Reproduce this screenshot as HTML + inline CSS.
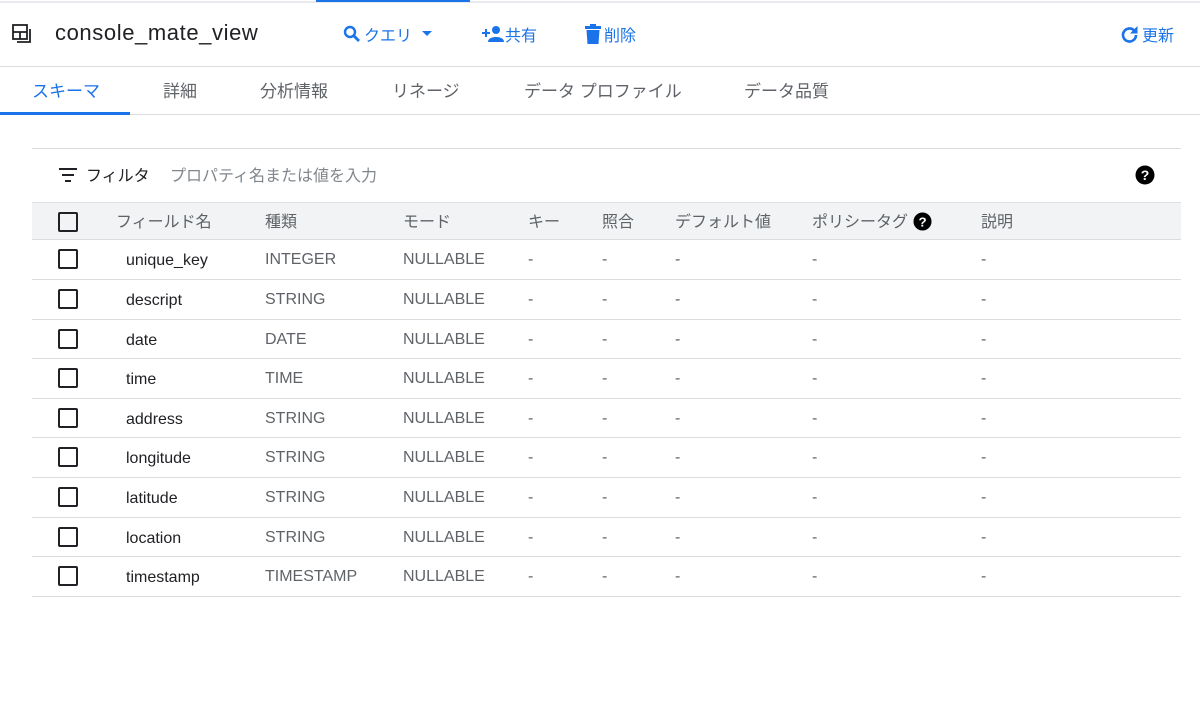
<!DOCTYPE html>
<html><head><meta charset="utf-8"><style>
*{margin:0;padding:0;box-sizing:border-box}
body{width:1200px;height:719px;background:#fff;font-family:"Liberation Sans","Noto Sans CJK JP",sans-serif;position:relative;overflow:hidden;color:#202124}
.a{position:absolute;white-space:nowrap}
.blue{color:#1a73e8}
.hl{position:absolute;height:1px;background:#dadce0}
.cb{position:absolute;width:20px;height:20px;border:2px solid #202124;border-radius:2px}
.g{color:#5f6368;font-size:16px}
.row{position:absolute;left:32px;width:1149px;height:39.6px;border-bottom:1px solid #dadce0}
.row span{position:absolute;top:11px;font-size:16px;color:#5f6368}
.row .cb{left:26px;top:9px}
.row .n{left:94px;color:#202124;top:12px}
</style></head><body>
<div class="hl" style="left:0;top:1px;width:1200px;height:2px;background:#e8eaed"></div>
<div class="a" style="left:316px;top:0;width:154px;height:2px;background:#1a73e8"></div>
<svg class="a" style="left:11px;top:23px" width="22" height="22" viewBox="0 0 22 22" fill="none" stroke="#202124" stroke-width="1.8"><rect x="2" y="2" width="14" height="14"/><path d="M2 9h14M9 9v7M19 6v13H6"/></svg>
<div class="a" style="left:55px;top:20px;font-size:22px;letter-spacing:0.6px;color:#202124">console_mate_view</div>
<svg class="a" style="left:343px;top:25px" width="18" height="18" viewBox="0 0 18 18"><circle cx="7" cy="7" r="5" fill="none" stroke="#1a73e8" stroke-width="2.4"/><path d="M10.5 10.5L16 16" stroke="#1a73e8" stroke-width="2.8"/></svg>
<div class="a blue" style="left:364px;top:22px;font-size:16px">クエリ</div>
<svg class="a" style="left:421px;top:30px" width="12" height="8"><path d="M1 1h10L6 6z" fill="#1a73e8"/></svg>
<svg class="a" style="left:482px;top:25px" width="24" height="18" viewBox="0 0 24 18" fill="#1a73e8"><path d="M3 4h2v3h3v2H5v3H3V9H0V7h3z"/><circle cx="14" cy="5" r="4"/><path d="M6 17c0-4 5-5 8-5s8 1 8 5z"/></svg>
<div class="a blue" style="left:505px;top:22px;font-size:16px">共有</div>
<svg class="a" style="left:585px;top:24px" width="16" height="20" viewBox="0 0 16 20" fill="#1a73e8"><rect x="0" y="2" width="16" height="3"/><rect x="5" y="0" width="6" height="3"/><path d="M1.5 6h13l-1 14h-11z"/></svg>
<div class="a blue" style="left:604px;top:22px;font-size:16px">削除</div>
<svg class="a" style="left:1120px;top:25px" width="20" height="20" viewBox="0 0 20 20"><path d="M16 10a6.5 6.5 0 1 1-2-4.7" fill="none" stroke="#1a73e8" stroke-width="2.6"/><path d="M17.5 1v7.5H10z" fill="#1a73e8"/></svg>
<div class="a blue" style="left:1142px;top:22px;font-size:16px">更新</div>
<div class="hl" style="left:0;top:66px;width:1200px"></div>
<div class="a blue" style="left:32px;top:77px;font-size:17px">スキーマ</div>
<div class="a g" style="left:163px;top:77px;font-size:17px">詳細</div>
<div class="a g" style="left:260px;top:77px;font-size:17px">分析情報</div>
<div class="a g" style="left:392px;top:77px;font-size:17px">リネージ</div>
<div class="a g" style="left:524px;top:77px;font-size:17px">データ プロファイル</div>
<div class="a g" style="left:744px;top:77px;font-size:17px">データ品質</div>
<div class="hl" style="left:0;top:114px;width:1200px"></div>
<div class="a" style="left:0;top:112px;width:130px;height:3px;background:#1a73e8"></div>
<div class="hl" style="left:32px;top:148px;width:1149px"></div>
<svg class="a" style="left:59px;top:168px" width="18" height="14"><path d="M0 1h18M3 7h12M6 13h6" stroke="#202124" stroke-width="2"/></svg>
<div class="a" style="left:86px;top:162px;font-size:16px;color:#202124">フィルタ</div>
<div class="a" style="left:170px;top:162px;font-size:16px;color:#80868b">プロパティ名または値を入力</div>
<svg class="a" style="left:1135px;top:165px" width="20" height="20" viewBox="0 0 20 20"><circle cx="10" cy="10" r="9.5" fill="#000"/><text x="10" y="15" text-anchor="middle" font-family="Liberation Sans" font-weight="bold" font-size="14" fill="#fff">?</text></svg>
<div class="a" style="left:32px;top:202px;width:1149px;height:38px;background:#f1f3f4;border-top:1px solid #e0e0e0;border-bottom:1px solid #dadce0"></div>
<div class="cb" style="left:58px;top:212px"></div>
<div class="a g" style="left:116px;top:208px">フィールド名</div>
<div class="a g" style="left:265px;top:208px">種類</div>
<div class="a g" style="left:403px;top:208px">モード</div>
<div class="a g" style="left:528px;top:208px">キー</div>
<div class="a g" style="left:602px;top:208px">照合</div>
<div class="a g" style="left:675px;top:208px">デフォルト値</div>
<div class="a g" style="left:812px;top:208px">ポリシータグ</div>
<svg class="a" style="left:913px;top:212px" width="19" height="19" viewBox="0 0 20 20"><circle cx="10" cy="10" r="9.5" fill="#000"/><text x="10" y="15" text-anchor="middle" font-family="Liberation Sans" font-weight="bold" font-size="14" fill="#fff">?</text></svg>
<div class="a g" style="left:981px;top:208px">説明</div>

<div class="row" style="top:240.4px"><div class="cb"></div><span class="n">unique_key</span><span style="left:233px">INTEGER</span><span style="left:371px">NULLABLE</span><span style="left:496px">-</span><span style="left:570px">-</span><span style="left:643px">-</span><span style="left:780px">-</span><span style="left:949px">-</span></div>
<div class="row" style="top:280px"><div class="cb"></div><span class="n">descript</span><span style="left:233px">STRING</span><span style="left:371px">NULLABLE</span><span style="left:496px">-</span><span style="left:570px">-</span><span style="left:643px">-</span><span style="left:780px">-</span><span style="left:949px">-</span></div>
<div class="row" style="top:319.6px"><div class="cb"></div><span class="n">date</span><span style="left:233px">DATE</span><span style="left:371px">NULLABLE</span><span style="left:496px">-</span><span style="left:570px">-</span><span style="left:643px">-</span><span style="left:780px">-</span><span style="left:949px">-</span></div>
<div class="row" style="top:359.2px"><div class="cb"></div><span class="n">time</span><span style="left:233px">TIME</span><span style="left:371px">NULLABLE</span><span style="left:496px">-</span><span style="left:570px">-</span><span style="left:643px">-</span><span style="left:780px">-</span><span style="left:949px">-</span></div>
<div class="row" style="top:398.8px"><div class="cb"></div><span class="n">address</span><span style="left:233px">STRING</span><span style="left:371px">NULLABLE</span><span style="left:496px">-</span><span style="left:570px">-</span><span style="left:643px">-</span><span style="left:780px">-</span><span style="left:949px">-</span></div>
<div class="row" style="top:438.4px"><div class="cb"></div><span class="n">longitude</span><span style="left:233px">STRING</span><span style="left:371px">NULLABLE</span><span style="left:496px">-</span><span style="left:570px">-</span><span style="left:643px">-</span><span style="left:780px">-</span><span style="left:949px">-</span></div>
<div class="row" style="top:478px"><div class="cb"></div><span class="n">latitude</span><span style="left:233px">STRING</span><span style="left:371px">NULLABLE</span><span style="left:496px">-</span><span style="left:570px">-</span><span style="left:643px">-</span><span style="left:780px">-</span><span style="left:949px">-</span></div>
<div class="row" style="top:517.6px"><div class="cb"></div><span class="n">location</span><span style="left:233px">STRING</span><span style="left:371px">NULLABLE</span><span style="left:496px">-</span><span style="left:570px">-</span><span style="left:643px">-</span><span style="left:780px">-</span><span style="left:949px">-</span></div>
<div class="row" style="top:557.2px"><div class="cb"></div><span class="n">timestamp</span><span style="left:233px">TIMESTAMP</span><span style="left:371px">NULLABLE</span><span style="left:496px">-</span><span style="left:570px">-</span><span style="left:643px">-</span><span style="left:780px">-</span><span style="left:949px">-</span></div>
</body></html>
